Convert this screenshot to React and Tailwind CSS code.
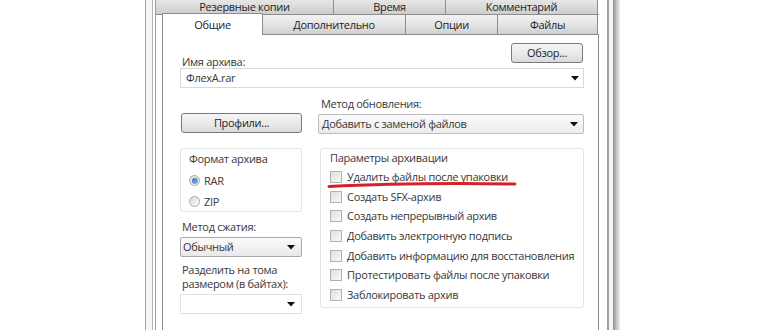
import React from 'react';

function Arrow() {
  return (
    <svg width="8" height="5" viewBox="0 0 8 5" className="shrink-0">
      <path d="M0 0 L8 0 L4 4.5 Z" fill="#111" />
    </svg>
  );
}

function PushButton({ children, className = '' }) {
  return (
    <div
      className={`h-[20px] flex items-center justify-center rounded-[3px] border border-[#7a7a7a] bg-gradient-to-b from-[#f4f4f4] via-[#ebebeb] to-[#d9d9d9] text-[#222] ${className}`}
    >
      {children}
    </div>
  );
}

function CheckBox({ label }) {
  return (
    <div className="flex items-center h-[19.7px] whitespace-nowrap">
      <span className="w-[12px] h-[12px] shrink-0 border border-[#b2b2b2] bg-gradient-to-br from-[#dedede] to-[#fbfbfb]" />
      <span className="ml-[5px]">{label}</span>
    </div>
  );
}

function Radio({ label, checked }) {
  return (
    <div className="flex items-center h-[21px]">
      <span className="w-[11px] h-[11px] shrink-0 rounded-full border border-[#a9a9a9] bg-gradient-to-br from-[#dcdcdc] to-[#fafafa] flex items-center justify-center">
        {checked && <span className="w-[6px] h-[6px] rounded-full bg-gradient-to-br from-[#2f6fb5] to-[#8fbbe6]" />}
      </span>
      <span className="ml-[4px]">{label}</span>
    </div>
  );
}

const options = [
  'Удалить файлы после упаковки',
  'Создать SFX-архив',
  'Создать непрерывный архив',
  'Добавить электронную подпись',
  'Добавить информацию для восстановления',
  'Протестировать файлы после упаковки',
  'Заблокировать архив',
];

export default function App() {
  return (
    <div className="w-[770px] h-[330px] overflow-hidden bg-white flex font-['Open_Sans',sans-serif] text-[11px] tracking-[-0.3px] leading-[14px] text-[#383838]">
      <div className="w-[145px] shrink-0" />
      <div className="w-px shrink-0 bg-[#a6a6a6]" />
      <div className="w-[6px] shrink-0 bg-[#f6f6f6]" />
      <div className="w-px shrink-0 bg-[#b3b3b3]" />
      <div className="w-[2px] shrink-0" />

      {/* tab control */}
      <div className="w-[444px] shrink-0 flex flex-col border-l border-[#9a9a9a]">
        <div className="flex h-[15px] border-b border-[#8c8c8c]">
          <div className="w-[178px] flex items-center justify-center border-r border-[#8c8c8c] bg-gradient-to-b from-[#e6e6e6] to-[#cdcdcd] text-[#1e1e1e]">
            Резервные копии
          </div>
          <div className="w-[112px] flex items-center justify-center border-r border-[#8c8c8c] bg-gradient-to-b from-[#e6e6e6] to-[#cdcdcd] text-[#1e1e1e]">
            Время
          </div>
          <div className="w-[152px] flex items-center justify-center border-r border-[#8c8c8c] bg-gradient-to-b from-[#e6e6e6] to-[#cdcdcd] text-[#1e1e1e]">
            Комментарий
          </div>
        </div>

        <div className="flex items-start h-[19px] ml-[6px]">
          <div className="relative z-10 w-[101px] h-[22px] -mt-[2px] flex items-center justify-center border-x border-t border-[#8c8c8c] bg-white text-[#1e1e1e]">
            Общие
          </div>
          <div className="w-[143px] h-full flex items-center justify-center border-r border-[#8c8c8c] bg-gradient-to-b from-[#f2f2f2] via-[#e4e4e4] to-[#d0d0d0] text-[#1e1e1e]">
            Дополнительно
          </div>
          <div className="w-[92px] h-full flex items-center justify-center border-r border-[#8c8c8c] bg-gradient-to-b from-[#f2f2f2] via-[#e4e4e4] to-[#d0d0d0] text-[#1e1e1e]">
            Опции
          </div>
          <div className="w-[100px] h-full flex items-center justify-center border-r border-[#8c8c8c] bg-gradient-to-b from-[#f2f2f2] via-[#e4e4e4] to-[#d0d0d0] text-[#1e1e1e]">
            Файлы
          </div>
        </div>

        <div className="flex-1 ml-[6px] border-x border-t border-[#8c8c8c] bg-white pl-[17px] pr-[14px]">
          <div className="flex justify-between h-[25px] mt-[8px]">
            <div className="pt-[12px] pl-[2px]">Имя архива:</div>
            <PushButton className="w-[72px] mr-px">Обзор...</PushButton>
          </div>

          <div className="h-[20px] flex items-center justify-between border border-[#d9d9d9] pl-[5px] pr-[4px]">
            <span>ФлехА.rar</span>
            <Arrow />
          </div>

          <div className="grid grid-cols-[122px_264px] gap-x-[18px] mt-[9px]">
            <div>
              <PushButton className="mt-[16px] ml-px">Профили...</PushButton>
            </div>
            <div>
              <div className="pl-px">Метод обновления:</div>
              <div className="h-[20px] mt-[3px] -ml-[2px] flex items-center justify-between rounded-[2px] border border-[#bdbdbd] bg-gradient-to-b from-[#fbfbfb] to-[#ececec] pl-[3px] pr-[5px]">
                <span>Добавить с заменой файлов</span>
                <Arrow />
              </div>
            </div>
          </div>

          <div className="grid grid-cols-[122px_264px] gap-x-[18px] mt-[14px]">
            <div className="flex flex-col">
              <div className="h-[64px] rounded-[3px] border border-[#e4e4e4] pl-[8px] pt-[3px]">
                <div className="h-[14px]">Формат архива</div>
                <div className="mt-[4px]">
                  <Radio label="RAR" checked />
                  <Radio label="ZIP" />
                </div>
              </div>
              <div className="mt-[8px] pl-[2px]">Метод сжатия:</div>
              <div className="h-[20px] mt-[3px] flex items-center justify-between rounded-[2px] border border-[#a9a9a9] bg-gradient-to-b from-[#fafafa] to-[#e9e9e9] pl-[2px] pr-[6px]">
                <span>Обычный</span>
                <Arrow />
              </div>
              <div className="mt-[6px] pl-[2px] leading-[14px] whitespace-nowrap">
                Разделить на тома
                <br />
                размером (в байтах):
              </div>
              <div className="h-[20px] mt-[3px] flex items-center justify-end border border-[#e2e2e2] pr-[6px]">
                <Arrow />
              </div>
            </div>

            <div className="relative h-[160px] rounded-[3px] border border-[#e4e4e4] pl-[9px] pt-[2px]">
              <div className="h-[14px]">Параметры архивации</div>
              <div className="mt-[2px]">
                {options.map((o) => (
                  <CheckBox key={o} label={o} />
                ))}
              </div>
              <svg
                className="absolute left-[6px] top-[32px]"
                width="192"
                height="8"
                viewBox="0 0 192 8"
              >
                <path d="M2 5.5 Q 80 1.5 188 3" stroke="#d4222b" strokeWidth="3" fill="none" strokeLinecap="round" />
              </svg>
            </div>
          </div>
        </div>
      </div>

      <div className="w-[8px] shrink-0" />
      <div className="w-[2px] shrink-0 bg-[#a0a0a0]" />
      <div className="w-[4px] shrink-0 bg-[#f4f4f4]" />
      <div className="w-[7px] shrink-0 bg-gradient-to-r from-[#8e8e8e] via-[#c4c4c4] to-[#ececec]" />
    </div>
  );
}
